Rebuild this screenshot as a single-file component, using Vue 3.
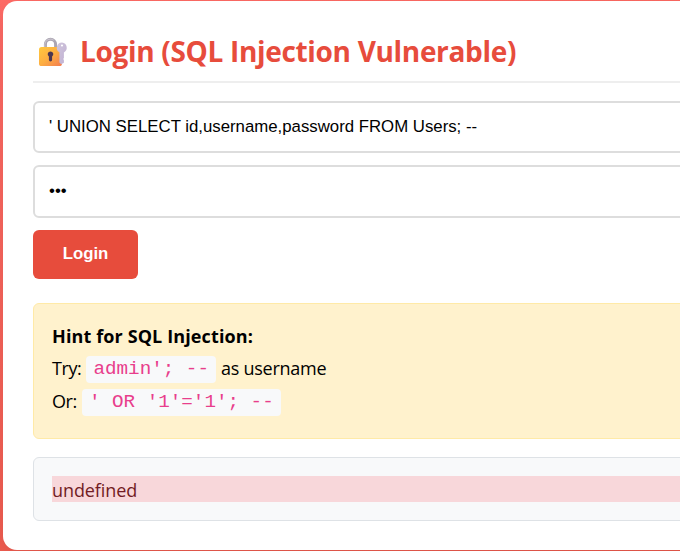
<script setup>
import { ref } from 'vue'

const username = ref("' UNION SELECT id,username,password FROM Users; --")
const password = ref('abc')
const result = ref('undefined')
</script>

<template>
  <main class="page">
    <section class="card">
      <h2 class="title">
        <svg class="lock" viewBox="0 0 32 32" aria-hidden="true">
          <defs>
            <linearGradient id="body" x1="0" y1="0" x2="1" y2="1">
              <stop offset="0" stop-color="#ffc83d" />
              <stop offset="0.5" stop-color="#fdae42" />
              <stop offset="1" stop-color="#f37b50" />
            </linearGradient>
            <linearGradient id="key" x1="0" y1="0" x2="1" y2="1">
              <stop offset="0" stop-color="#d0c6dc" />
              <stop offset="1" stop-color="#c0b0d2" />
            </linearGradient>
          </defs>
          <path d="M8.4 12V8.4a5.1 5.1 0 0 1 10.2 0V12" fill="none" stroke="#aba5b2" stroke-width="3" />
          <path d="M7.8 12V8.4a5.6 5.6 0 0 1 9-4.2" fill="none" stroke="#cbc6d0" stroke-width="1" />
          <rect x="2" y="11" width="23" height="19" rx="2.6" fill="url(#body)" />
          <path d="M13.5 15.4a2.8 2.8 0 0 0-1.6 5.1v3.3a1.6 1.6 0 0 0 3.2 0v-3.3a2.8 2.8 0 0 0-1.6-5.1z" fill="#4b3550" />
          <path
            d="M25 6.6a5.2 5.2 0 0 0-2.6 9.7v10.2l1.8 1.8 2.7-1.5V24l-.7-1 .7-1v-5.6A5.2 5.2 0 0 0 25 6.6zm0 1.8a1.1 1.1 0 1 1 0 2.2 1.1 1.1 0 0 1 0-2.2z"
            fill="url(#key)" fill-rule="evenodd"
          />
        </svg>
        <span>Login (SQL Injection Vulnerable)</span>
      </h2>
      <form class="form" @submit.prevent>
        <input v-model="username" class="field" type="text" spellcheck="false" />
        <input v-model="password" class="field secret" type="password" />
        <button class="login" type="submit">Login</button>
      </form>
      <div class="hint">
        <strong>Hint for SQL Injection:</strong>
        <p><span class="try">Try:</span><code>admin'; --</code><span class="as">as username</span></p>
        <p><span class="or">Or:</span><code>' OR '1'='1'; --</code></p>
      </div>
      <div class="result"><div class="error"><span>{{ result }}</span></div></div>
    </section>
  </main>
</template>

<style>
body {
  overflow: hidden;
}
</style>

<style scoped>
.page {
  box-sizing: border-box;
  width: 680px;
  height: 551px;
  padding: 1px 0 1px 3px;
  overflow: hidden;
  background: linear-gradient(170deg, #ff6b66, #ee5a4c);
  font-family: "Open Sans", "Noto Sans", sans-serif;
  font-size: 18px;
  color: #000;
}
.card {
  box-sizing: border-box;
  width: 760px;
  height: 549px;
  padding: 30px;
  border-radius: 14px;
  background: #fff;
  box-shadow: 0 8px 24px rgba(0, 0, 0, 0.1);
}
.title {
  display: flex;
  align-items: center;
  box-sizing: border-box;
  height: 52px;
  margin: 0 0 18px;
  padding-bottom: 10px;
  border-bottom: 2px solid #eee;
  font-size: 28px;
  line-height: 40px;
  color: #e74c3c;
}
.title span {
  letter-spacing: -0.32px;
  white-space: nowrap;
}
.lock {
  flex: none;
  width: 32px;
  height: 32px;
  margin: 2px 11px 0 4px;
}
.form {
  display: flex;
  flex-direction: column;
  align-items: flex-start;
  gap: 12px;
}
.field {
  box-sizing: border-box;
  width: 700px;
  height: 52px;
  margin: 0;
  padding: 0 14px;
  border: 2px solid #ddd;
  border-radius: 6px;
  background: #fff;
  font: 16.8px "Liberation Sans", sans-serif;
  color: #000;
  outline: none;
}
.secret {
  height: 53px;
  padding-bottom: 2px;
}
.login {
  width: 105px;
  height: 49px;
  padding: 0 0 2px;
  border: 0;
  border-radius: 6px;
  background: #e74c3c;
  font: bold 16.8px "Liberation Sans", sans-serif;
  color: #fff;
}
.hint {
  box-sizing: border-box;
  width: 700px;
  height: 136px;
  margin-top: 24px;
  padding: 16px 18px;
  border: 1px solid #ffeaa7;
  border-radius: 6px;
  background: #fff2cd;
  line-height: 33px;
}
.hint strong {
  display: block;
  height: 32px;
  letter-spacing: 0.12px;
}
.hint p {
  display: flex;
  align-items: center;
  height: 33px;
  margin: 0;
}
.hint code {
  height: 27px;
  margin-top: 2px;
  padding: 0 7px;
  border-radius: 4px;
  background: #f8f9fa;
  font: 19.25px/27px "Liberation Mono", monospace;
  color: #e83e8c;
}
.try,
.or {
  margin-right: 5px;
  letter-spacing: -0.4px;
}
.as {
  margin-left: 5px;
  letter-spacing: -0.25px;
}
.result {
  box-sizing: border-box;
  width: 700px;
  height: 64px;
  margin-top: 18px;
  padding: 18px;
  border: 1px solid #dee2e6;
  border-radius: 6px;
  background: #f8f9fa;
}
.error {
  height: 26px;
  background: #f8d7da;
  line-height: 28px;
  letter-spacing: -0.1px;
  color: #721c24;
}
</style>
